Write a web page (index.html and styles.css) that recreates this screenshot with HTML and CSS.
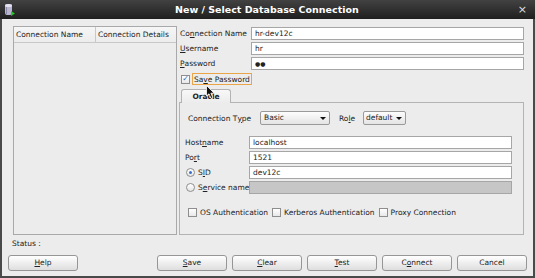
FILE: index.html
```html
<!DOCTYPE html>
<html lang="en">

<head>
    <meta charset="UTF-8">
    <title>New / Select Database Connection</title>
    <link rel="stylesheet" href="styles.css">
</head>

<body>
    <div class="window">
        <div class="titlebar">
            <svg class="app-icon" width="12" height="14" viewBox="0 0 12 14">
                <rect x="1" y="1" width="7" height="11" rx="2" fill="#b9b6cf" />
                <ellipse cx="4.5" cy="2.5" rx="3.5" ry="1.5" fill="#e4e2f2" />
                <rect x="2" y="4" width="1" height="7" fill="#8a87a8" />
                <path d="M7 8 L11 10.5 L7 13 Z" fill="#2bc42b" />
            </svg>
            <span class="title">New / Select Database Connection</span>
            <span class="close">&#215;</span>
        </div>

        <div class="main">
            <div class="conn-list">
                <div class="list-head">
                    <div class="col c1">Connection Name</div>
                    <div class="col c2">Connection Details</div>
                </div>
            </div>

            <div class="form">
                <div class="row">
                    <div class="lbl">Co<u>n</u>nection Name</div>
                    <div class="field">hr-dev12c</div>
                </div>
                <div class="row">
                    <div class="lbl"><u>U</u>sername</div>
                    <div class="field">hr</div>
                </div>
                <div class="row">
                    <div class="lbl"><u>P</u>assword</div>
                    <div class="field dots">&#9679;&#9679;</div>
                </div>

                <div class="save-row">
                    <span class="check checked">&#10003;</span>
                    <span class="save-label">Sa<u>v</u>e Password</span>
                </div>

                <div class="tabs">
                    <div class="tab">Oracle</div>
                </div>
                <div class="tab-panel">
                    <div class="type-row">
                        <div class="lbl type-lbl">Connection T<u>y</u>pe</div>
                        <div class="select sel-type">Basic<span class="arrow"></span></div>
                        <div class="lbl role-lbl">Ro<u>l</u>e</div>
                        <div class="select sel-role">default<span class="arrow"></span></div>
                    </div>

                    <div class="host-rows">
                        <div class="row">
                            <div class="lbl host-lbl">Host<u>n</u>ame</div>
                            <div class="field">localhost</div>
                        </div>
                        <div class="row">
                            <div class="lbl host-lbl">Po<u>r</u>t</div>
                            <div class="field">1521</div>
                        </div>
                        <div class="row">
                            <div class="lbl host-lbl"><span class="radio on"></span>S<u>I</u>D</div>
                            <div class="field">dev12c</div>
                        </div>
                        <div class="row">
                            <div class="lbl host-lbl"><span class="radio"></span>S<u>e</u>rvice name</div>
                            <div class="field disabled"></div>
                        </div>
                    </div>

                    <div class="auth-row">
                        <span class="check"></span><span class="auth-lbl">OS Authentication</span>
                        <span class="check"></span><span class="auth-lbl">Kerberos Authentication</span>
                        <span class="check"></span><span class="auth-lbl">Proxy Connection</span>
                    </div>
                </div>
            </div>
        </div>

        <div class="status">Status :</div>

        <div class="buttons">
            <div class="btn"><u>H</u>elp</div>
            <div class="btn-group">
                <div class="btn"><u>S</u>ave</div>
                <div class="btn"><u>C</u>lear</div>
                <div class="btn"><u>T</u>est</div>
                <div class="btn">C<u>o</u>nnect</div>
                <div class="btn">Cancel</div>
            </div>
        </div>

        <svg class="cursor" width="10" height="15" viewBox="0 0 10 15">
            <path d="M0.5 0.5 L0.5 11 L3 8.8 L5 13.5 L6.8 12.7 L4.9 8.2 L8.2 8.2 Z" fill="#111" stroke="#fff" stroke-width="0.8" />
        </svg>
    </div>
</body>

</html>
```

FILE: styles.css
```css
body {
    margin: 0;
    padding: 0;
    font-family: "DejaVu Sans", sans-serif;
    font-size: 7.5px;
    color: #222;
    background-color: #ececec;
}

u {
    text-decoration: underline;
    text-underline-offset: 1px;
}

.window {
    position: relative;
    width: 535px;
    height: 278px;
    box-sizing: border-box;
    border-left: 2px solid #4a4a4a;
    border-right: 2px solid #4a4a4a;
    border-bottom: 2px solid #4a4a4a;
    background-color: #ececec;
    display: flex;
    flex-direction: column;
}

.titlebar {
    height: 19px;
    margin: 0 -2px;
    background: linear-gradient(#424242, #1f1f1f);
    display: flex;
    align-items: center;
    justify-content: space-between;
    padding: 0 8px 0 4px;
    color: #fff;
}

.title {
    font-weight: bold;
    font-size: 9.5px;
}

.close {
    font-size: 11px;
    color: #ddd;
}

.main {
    display: flex;
    padding: 7px 0 0 11px;
    height: 210px;
}

.conn-list {
    width: 162px;
    height: 207px;
    border: 1px solid #a9a9a9;
    background-color: #ececec;
}

.list-head {
    display: flex;
    height: 15px;
    border-bottom: 1px solid #c8c8c8;
    background: linear-gradient(#f6f6f6, #ececec);
}

.col {
    line-height: 15px;
    padding-left: 2px;
}

.c1 {
    width: 79px;
    border-right: 1px solid #c8c8c8;
}

.form {
    margin-left: 2px;
    width: 345px;
    display: flex;
    flex-direction: column;
}

.row {
    display: flex;
    height: 13px;
    margin-top: 2px;
    align-items: center;
}

.form > .row:first-child {
    margin-top: 1px;
}

.lbl {
    width: 72px;
    flex-shrink: 0;
    white-space: nowrap;
    padding-left: 1px;
    box-sizing: border-box;
    display: flex;
    align-items: center;
}

.field {
    flex: 1;
    height: 13px;
    box-sizing: border-box;
    border: 1px solid #a6a6a6;
    background-color: #fff;
    line-height: 11px;
    padding-left: 3px;
}

.dots {
    font-size: 6px;
}

.field.disabled {
    background-color: #c6c6c6;
}

.save-row {
    display: flex;
    align-items: center;
    height: 12px;
    margin-top: 3px;
    padding-left: 2px;
}

.check {
    width: 9px;
    height: 9px;
    flex-shrink: 0;
    box-sizing: border-box;
    border: 1px solid #8e8e8e;
    background: linear-gradient(#fff, #e8e8e8);
    display: inline-flex;
    align-items: center;
    justify-content: center;
    font-size: 8px;
    color: #3868b8;
    line-height: 1;
}

.save-label {
    margin-left: 2px;
    border: 1px solid #e9a548;
    padding: 0 1px;
    height: 12px;
    line-height: 11px;
    box-sizing: border-box;
}

.tabs {
    display: flex;
    margin-top: 4px;
    padding-left: 2px;
    height: 13px;
}

.tab {
    width: 50px;
    box-sizing: border-box;
    border: 1px solid #b3b3b3;
    border-bottom: none;
    border-radius: 3px 3px 0 0;
    background: linear-gradient(#f8f8f8, #ececec);
    font-weight: bold;
    line-height: 13px;
    text-align: center;
    position: relative;
    z-index: 1;
    height: 14px;
}

.tab-panel {
    height: 133px;
    box-sizing: border-box;
    border: 1px solid #b3b3b3;
    padding: 8px 0 0 8px;
}

.type-row {
    display: flex;
    align-items: center;
    height: 14px;
}

.type-lbl {
    width: 72px;
    padding-left: 0;
}

.select {
    height: 14px;
    box-sizing: border-box;
    border: 1px solid #9a9a9a;
    border-radius: 2px;
    background: linear-gradient(#fdfdfd, #e4e4e4);
    padding-left: 3px;
    line-height: 12px;
    position: relative;
}

.arrow {
    position: absolute;
    right: 3px;
    top: 5px;
    border-left: 3px solid transparent;
    border-right: 3px solid transparent;
    border-top: 3px solid #111;
}

.sel-type {
    width: 70px;
}

.role-lbl {
    width: 24px;
    margin-left: 9px;
    padding-left: 0;
}

.sel-role {
    width: 43px;
    padding-left: 2px;
}

.host-rows {
    margin: 11px 11px 0 -3px;
}

.host-lbl {
    width: 64px;
    padding-left: 0;
}

.radio {
    width: 9px;
    height: 9px;
    flex-shrink: 0;
    box-sizing: border-box;
    border: 1px solid #8e8e8e;
    border-radius: 50%;
    background: linear-gradient(#fff, #e6e6e6);
    margin: 0 3px 0 1px;
    display: inline-flex;
    align-items: center;
    justify-content: center;
}

.radio.on::after {
    content: "";
    width: 3px;
    height: 3px;
    border-radius: 50%;
    background-color: #3c6fc4;
}

.auth-row {
    display: flex;
    align-items: center;
    margin-top: 12px;
    height: 12px;
}

.auth-lbl {
    margin: 0 4px 0 3px;
}

.status {
    height: 13px;
    padding-left: 10px;
    line-height: 13px;
    margin-top: 1px;
}

.buttons {
    display: flex;
    justify-content: space-between;
    padding: 5px 6px 0 6px;
}

.btn-group {
    display: flex;
    gap: 5px;
}

.btn {
    width: 70px;
    height: 16px;
    box-sizing: border-box;
    border: 1px solid #969696;
    border-radius: 3px;
    background: linear-gradient(#ffffff, #dedede);
    text-align: center;
    line-height: 14px;
}

.cursor {
    position: absolute;
    left: 204px;
    top: 85px;
    z-index: 5;
}
```
